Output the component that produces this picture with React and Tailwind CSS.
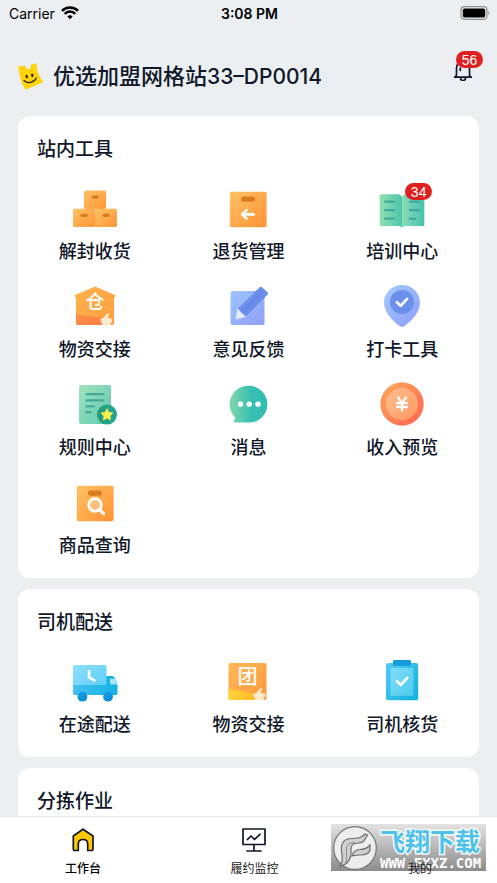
import React from "react";

const INK = "#101729";

function Gradient({ id, from, to, flat }) {
  return (
    <linearGradient id={id} x1="0" y1="0" x2="1" y2={flat ? "0" : "1"}>
      <stop offset="0" stopColor={from} />
      <stop offset="1" stopColor={to} />
    </linearGradient>
  );
}

function Icon({ children }) {
  return (
    <svg viewBox="0 0 48 48" className="size-12" fill="none" aria-hidden="true">
      {children}
    </svg>
  );
}

function BoxesIcon() {
  return (
    <Icon>
      <defs><Gradient id="boxes" from="#ffc266" to="#ff9638" /></defs>
      {[[13, 6.5], [2, 24.7], [24, 24.7]].map(([x, y]) => (
        <g key={`${x}-${y}`}>
          <rect x={x} y={y} width="22" height="18.4" rx="1.6" fill="url(#boxes)" />
          <rect x={x + 7.5} y={y + 5} width="7.4" height="3.2" rx="1.6" fill="#d97d1c" />
        </g>
      ))}
    </Icon>
  );
}

function ParcelIcon({ children }) {
  return (
    <Icon>
      <defs><Gradient id="parcel" from="#ffc266" to="#ff9233" /></defs>
      <rect x="5.8" y="7.8" width="36.8" height="35.4" rx="1.8" fill="url(#parcel)" />
      <rect x="17" y="12.4" width="14" height="5.4" rx="2.2" fill="#d97d1c" />
      {children}
    </Icon>
  );
}

function ReturnIcon() {
  return (
    <ParcelIcon>
      <path d="M22.5 26.3 18.2 30.4l4.3 4.1M18.8 30.4h11" stroke="#fff" strokeWidth="2.7" strokeLinecap="round" strokeLinejoin="round" />
    </ParcelIcon>
  );
}

function SearchIcon() {
  return (
    <ParcelIcon>
      <circle cx="24" cy="27" r="6.3" fill="#ffc07c" stroke="#fff" strokeWidth="2.7" />
      <path d="m28.8 31.8 3.8 3.8" stroke="#fff" strokeWidth="3" strokeLinecap="round" />
    </ParcelIcon>
  );
}

function BookIcon() {
  return (
    <Icon>
      <defs>
        <Gradient id="page-left" from="#92dfb0" to="#4bc6ab" flat />
        <Gradient id="page-right" from="#8bdcb4" to="#45c3ae" flat />
      </defs>
      <path d="M3.2 10.3h16.3c2.5 0 4.5 1.4 4.5 3.4v30.6c-.6-1.6-1.6-2.3-3.2-2.3H3.2a1.5 1.5 0 0 1-1.5-1.5V11.8a1.5 1.5 0 0 1 1.5-1.5Z" fill="url(#page-left)" />
      <path d="M44.8 10.3H28.5c-2.5 0-4.5 1.4-4.5 3.4v30.6c.6-1.6 1.6-2.3 3.2-2.3h17.6a1.5 1.5 0 0 0 1.5-1.5V11.8a1.5 1.5 0 0 0-1.5-1.5Z" fill="url(#page-right)" />
      <path d="M7 17.7h9M7 26.2h9M7 34.7h9M32 17.7h9M32 26.2h9M32 34.7h5" stroke="#41a99c" strokeWidth="2.3" strokeLinecap="round" />
    </Icon>
  );
}

function Hand() {
  return (
    <path d="M31.5 43 29 37.2l3.4-1.4 4.1-4.6c1.2-.4 1.9.7 1.3 1.9l-1.2 2.7 4.2 1c.6.2.7.7.6 1.2L39.2 43Z" fill="#ffecd0" />
  );
}

function DepotIcon() {
  return (
    <Icon>
      <defs>
        <Gradient id="depot" from="#ffb651" to="#ff9a3d" />
        <Gradient id="depot-floor" from="#ff8e47" to="#ff7e40" flat />
        <clipPath id="depot-clip">
          <path d="M24 4.6 44 13c.6.3.6 1.7-.1 2.3L43 15.3V41.5A1.6 1.6 0 0 1 41.4 43H6.6A1.6 1.6 0 0 1 5 41.5V15.3L4 15.2c-.6-.6-.6-1.9.1-2.2Z" />
        </clipPath>
      </defs>
      <g clipPath="url(#depot-clip)">
        <rect width="48" height="48" fill="url(#depot)" />
        <path d="m4 32.5 27 3.5 3 8H4Z" fill="url(#depot-floor)" />
        <Hand />
      </g>
      <text x="24" y="27" textAnchor="middle" fontSize="19" fontWeight="500" fill="#fff">仓</text>
    </Icon>
  );
}

function GroupIcon() {
  return (
    <Icon>
      <defs>
        <Gradient id="group" from="#ffbd5c" to="#ff9335" />
        <Gradient id="group-floor" from="#ffd340" to="#ffbd20" flat />
        <clipPath id="group-clip"><rect x="4.5" y="6" width="38" height="37" rx="2" /></clipPath>
      </defs>
      <g clipPath="url(#group-clip)">
        <rect width="48" height="48" fill="url(#group)" />
        <path d="m4 31.5 25 4.5 2 8H4Z" fill="url(#group-floor)" />
        <Hand />
      </g>
      <text x="23.5" y="27" textAnchor="middle" fontSize="20" fontWeight="500" fill="#fff">团</text>
    </Icon>
  );
}

function PencilIcon() {
  return (
    <Icon>
      <defs>
        <Gradient id="note" from="#9dc4ff" to="#929ff8" />
        <Gradient id="pencil" from="#6f96ec" to="#6a86e8" />
      </defs>
      <rect x="6.5" y="9" width="34" height="34" rx="1.8" fill="url(#note)" />
      <path d="M12 37 13.8 27 21.5 34.2Z" fill="#dfebff" stroke="#dfebff" strokeLinejoin="round" />
      <path d="M13.8 26.8 35.3 5.5a2.2 2.2 0 0 1 3 0l5 4.6a2.2 2.2 0 0 1 0 3L21.7 34.4Z" fill="url(#pencil)" />
      <path d="m17.7 30.6 20.8-20.8" stroke="#6689e6" strokeWidth="3" />
    </Icon>
  );
}

function PinIcon() {
  return (
    <Icon>
      <defs><Gradient id="pin" from="#a4ccff" to="#8d9cfb" /></defs>
      <path d="M24 3C14 3 6 10.8 6 20.6c0 8.7 6.9 17.3 15.8 23.7a3.7 3.7 0 0 0 4.4 0C35.1 37.9 42 29.3 42 20.6 42 10.8 34 3 24 3Z" fill="url(#pin)" />
      <circle cx="24" cy="20" r="12" fill="#6b90eb" />
      <path d="m19 20.3 3.7 3.6 6.3-7" stroke="#fff" strokeWidth="2.7" strokeLinecap="round" strokeLinejoin="round" />
    </Icon>
  );
}

function RulesIcon() {
  return (
    <Icon>
      <defs>
        <Gradient id="rules" from="#a2e3bd" to="#5cc9b0" />
        <Gradient id="seal" from="#279b78" to="#1fa995" flat />
      </defs>
      <rect x="8" y="5" width="32" height="39" rx="2" fill="url(#rules)" />
      <path d="M15.5 14.2h17M15.5 20.3h17M15.5 26.3h7.5M15.5 32.2h4" stroke="#44a79b" strokeWidth="2.2" strokeLinecap="round" />
      <circle cx="36" cy="34.6" r="10" fill="url(#seal)" />
      <path d="m36 28.7 1.8 3.7 4.1.6-3 2.9.7 4.1-3.6-2-3.6 2 .7-4.1-3-2.9 4.1-.6Z" fill="#ffee4e" stroke="#ffee4e" strokeWidth=".8" strokeLinejoin="round" />
    </Icon>
  );
}

function MessageIcon() {
  return (
    <Icon>
      <defs>
        <linearGradient id="message" x1="0" x2="1">
          <stop offset="0" stopColor="#84d6ab" />
          <stop offset=".55" stopColor="#38c0b2" />
          <stop offset="1" stopColor="#2fbdb2" />
        </linearGradient>
      </defs>
      <path d="M25 5.8a18.4 18.4 0 1 1 0 36.8H11.2c-1.2 0-1.8-1-1.2-2l1.2-3.2A18.4 18.4 0 0 1 25 5.8Z" fill="url(#message)" />
      <circle cx="16.5" cy="24.2" r="2.7" fill="#fff" />
      <circle cx="25.2" cy="24.2" r="2.7" fill="#fff" />
      <circle cx="34" cy="24.2" r="2.7" fill="#fff" />
    </Icon>
  );
}

function IncomeIcon() {
  return (
    <Icon>
      <defs>
        <Gradient id="coin" from="#ffaa5c" to="#ff6350" />
        <Gradient id="coin-face" from="#ffc18f" to="#ff9560" />
      </defs>
      <circle cx="24" cy="24" r="21.7" fill="url(#coin)" />
      <circle cx="24" cy="24" r="16" fill="url(#coin-face)" />
      <path d="m20 17.5 4 5.7 4-5.7M24 23.2v7.5M19 23.2h10M19 27h10" stroke="#fff" strokeWidth="2.3" strokeLinecap="round" strokeLinejoin="round" />
    </Icon>
  );
}

function TruckIcon() {
  return (
    <Icon>
      <defs>
        <Gradient id="cargo" from="#8fe0ff" to="#55cbf5" />
        <Gradient id="chassis" from="#45bff0" to="#14b2e4" flat />
        <Gradient id="wheel" from="#1ba0e6" to="#0586d6" />
      </defs>
      <path d="M35 19h6c1 0 1.7.4 2.2 1.2l2.7 5c.3.5.4 1 .4 1.6v9.7c0 1-.6 1.5-1.5 1.5H35Z" fill="#18b3e5" />
      <rect x="2" y="8" width="33.5" height="29" rx="2" fill="url(#cargo)" />
      <path d="M2 28h44.3v8.5c0 1-.6 1.5-1.5 1.5H3.5A1.5 1.5 0 0 1 2 36.5Z" fill="url(#chassis)" />
      <path d="M39 21.7h4.5l2.5 4.5v1.3h-5.5c-1 0-1.5-.5-1.5-1.5Z" fill="#a8e8ff" />
      <path d="M18 14.2v6.2l5.3 3" stroke="#fff" strokeWidth="2.7" strokeLinecap="round" strokeLinejoin="round" />
      <circle cx="11.4" cy="39.7" r="4.9" fill="url(#wheel)" />
      <circle cx="37" cy="39.7" r="4.9" fill="url(#wheel)" />
    </Icon>
  );
}

function ClipboardIcon() {
  return (
    <Icon>
      <defs>
        <Gradient id="board" from="#55c9f3" to="#0eb2de" />
        <Gradient id="sheet" from="#82dcfb" to="#4acbed" />
      </defs>
      <rect x="8" y="6" width="32.2" height="37.2" rx="2" fill="url(#board)" />
      <rect x="12.5" y="11" width="23" height="27.7" rx="1" fill="url(#sheet)" />
      <rect x="15" y="3" width="18" height="5.7" rx="1.2" fill="#149bdc" />
      <path d="m19 24.2 3.8 3.7 6.4-7" stroke="#fff" strokeWidth="2.8" strokeLinecap="round" strokeLinejoin="round" />
    </Icon>
  );
}

const stationTools = [
  { label: "解封收货", icon: BoxesIcon },
  { label: "退货管理", icon: ReturnIcon },
  { label: "培训中心", icon: BookIcon, count: 34 },
  { label: "物资交接", icon: DepotIcon },
  { label: "意见反馈", icon: PencilIcon },
  { label: "打卡工具", icon: PinIcon },
  { label: "规则中心", icon: RulesIcon },
  { label: "消息", icon: MessageIcon },
  { label: "收入预览", icon: IncomeIcon },
  { label: "商品查询", icon: SearchIcon },
];

const driverTools = [
  { label: "在途配送", icon: TruckIcon },
  { label: "物资交接", icon: GroupIcon },
  { label: "司机核货", icon: ClipboardIcon },
];

function Badge({ children, className }) {
  return (
    <span className={`absolute flex h-[17px] w-[27px] items-center justify-center rounded-full bg-[#df2020] font-['Liberation_Sans',sans-serif] text-[14px] leading-none font-normal text-white ${className}`}>
      {children}
    </span>
  );
}

function Tool({ label, icon: ToolIcon, count }) {
  return (
    <button type="button" className="flex flex-col items-center gap-[6px]">
      <span className="relative block">
        <ToolIcon />
        {count && <Badge className="-top-px left-[27px]">{count}</Badge>}
      </span>
      <span className="text-[18px] leading-7 font-medium">{label}</span>
    </button>
  );
}

function Panel({ title, tools }) {
  return (
    <section className="rounded-xl bg-white pt-5 pb-[18px]">
      <h2 className="px-[19px] text-[19px] leading-7 font-medium">{title}</h2>
      <div className="mt-5 grid grid-cols-3 gap-y-4">
        {tools.map((tool) => <Tool key={tool.label} {...tool} />)}
      </div>
    </section>
  );
}

function StatusBar() {
  return (
    <div className="grid h-[26px] shrink-0 grid-cols-3 items-center pr-[7px] pl-[9px] text-[14px] text-black">
      <span className="flex items-center gap-[6px]">
        Carrier
        <svg viewBox="0 0 18 14" className="h-[14px] w-[18px]" aria-hidden="true">
          <path d="M9 13.2 6.3 10.5a3.9 3.9 0 0 1 5.4 0Z" fill="#000" />
          <path d="M3.7 7.8a7.5 7.5 0 0 1 10.6 0M1 4.8a11.4 11.4 0 0 1 16 0" fill="none" stroke="#000" strokeWidth="2.5" />
        </svg>
      </span>
      <span className="text-center font-semibold">3:08 PM</span>
      <svg viewBox="0 0 30 14" className="h-[14px] w-[30px] justify-self-end" aria-hidden="true">
        <rect x="1" y=".7" width="26" height="12.6" rx="3.5" fill="none" stroke="#8d9092" strokeWidth="1.2" />
        <rect x="2.8" y="2.5" width="22.4" height="9" rx="1.8" fill="#000" />
        <path d="M28.3 5v4c1.4-.5 1.4-3.5 0-4Z" fill="#8d9092" />
      </svg>
    </div>
  );
}

function Header() {
  return (
    <header className="flex h-[90px] shrink-0 items-center px-[18px] pt-[10px]">
      <svg viewBox="0 0 26 27" className="h-[27px] w-[26px]" aria-hidden="true">
        <path d="M.3 5C.2 4 .6 3.400 1.500 3.300l4.400-.5c1 0 1.500.4 1.800 1.300.6 1.600 1.700 2.300 3.200 2 1.400-.3 2-1.300 1.800-2.900-.1-1 .3-1.600 1.200-1.800l3.300-.8c.9-.1 1.400.3 1.500 1.200.2 6.500 2 11 6 16 .5.700.4 1.300-.3 1.700L8.600 26.200c-.8.4-1.500.1-1.900-.7C3 19.500 1.200 12 .3 5Z" fill="#ffd30a" />
        <ellipse cx="8.700" cy="13.500" rx="1.200" ry="1.800" fill="#28251d" transform="rotate(-12 8.7 13.5)" />
        <ellipse cx="14.300" cy="12.200" rx="1.200" ry="1.800" fill="#28251d" transform="rotate(-12 14.3 12.2)" />
        <path d="M6 17.500c3.500 3.500 10 2.300 12.300-2.500" fill="none" stroke="#28251d" strokeWidth="1.200" strokeLinecap="round" />
      </svg>
      <h1 className="ml-[9px] text-[22px] leading-8 font-medium">
        优选加盟网格站<span className="text-[21px]">33–DP0014</span>
      </h1>
      <button type="button" aria-label="通知" className="relative mt-[-12px] mr-[5px] ml-auto">
        <svg viewBox="0 0 22 22" className="size-[22px]" fill="none" stroke={INK} strokeWidth="1.7" aria-hidden="true">
          <path d="M4.500 16.500V9a6.500 6.500 0 0 1 13 0v7.500l1.800 1.700H2.700Z" strokeLinejoin="round" />
          <path d="M8.500 19a2.500 2.500 0 0 0 5 0M8.300 11.500V9" strokeLinecap="round" />
        </svg>
        <Badge className="-top-2 left-1">56</Badge>
      </button>
    </header>
  );
}

function Tab({ label, active, children }) {
  return (
    <button type="button" aria-current={active ? "page" : undefined} className={`flex flex-col items-center gap-[7px] text-[12px] leading-5 ${active ? "font-medium text-black" : "text-[#222]"}`}>
      <svg viewBox="0 0 24 24" className="size-6" fill="none" stroke={INK} strokeWidth="1.7" strokeLinejoin="round" strokeLinecap="round" aria-hidden="true">
        {children}
      </svg>
      <span className="relative z-10">{label}</span>
    </button>
  );
}

function Watermark() {
  return (
    <div className="pointer-events-none absolute right-[11px] bottom-3 flex h-[47px] w-[155px] items-center bg-linear-to-b from-[#dedede]/85 to-[#808080]/90 pl-[2px]">
      <svg viewBox="0 0 44 44" className="size-11 shrink-0" aria-hidden="true">
        <circle cx="22" cy="22" r="21.3" fill="#ededed" stroke="#777" strokeWidth="1.2" />
        <path d="M7 40c4-5 2-10 1.500-15C7.500 16 12 12.500 19 12.500c6 0 9-.5 13-4.500l2.500 1-4 6.500c-3 2-6 1.500-8.500 2-3 .6-4 2.500-4 6 .5 8-2.500 15-11 16.500Z" fill="#d0d0d0" stroke="#6c6c6c" strokeWidth="1.2" />
        <path d="M12 38c3-5 1-11 1.500-15.500.4-4 3.500-6 8.500-6" fill="none" stroke="#888" />
        <path d="M19 30c1.500-5 4-6.500 8-6.500 4.500 0 7-1 10-4.500v5c-1.500 4.500-5 5-9 5-3.500 0-5.500 0-9 1Z" fill="#d0d0d0" stroke="#6c6c6c" strokeWidth="1.2" />
      </svg>
      <div className="ml-[3px] flex flex-col">
        <span className="text-[25px] leading-[30px] font-bold whitespace-nowrap text-[#4fc1e9] [-webkit-text-stroke:3px_#f4fbfd] [paint-order:stroke_fill]">飞翔下载</span>
        <span className="font-['DejaVu_Sans_Mono','Liberation_Mono',monospace] text-[14px] leading-3 font-bold whitespace-nowrap text-white">WWW.FXXZ.COM</span>
      </div>
    </div>
  );
}

export default function App() {
  return (
    <div className="flex h-screen flex-col bg-[#ebeff2] font-[Inter,'Noto_Sans_CJK_SC',sans-serif] text-[#101729]">
      <StatusBar />
      <Header />
      <main className="flex min-h-0 flex-1 flex-col gap-[11px] overflow-y-auto px-[18px] [scrollbar-width:none] *:shrink-0">
        <Panel title="站内工具" tools={stationTools} />
        <Panel title="司机配送" tools={driverTools} />
        <Panel title="分拣作业" tools={[]} />
      </main>
      <nav className="relative flex shrink-0 justify-between border-t border-[#e3e6e8] bg-white px-[65px] pt-[11px] pb-1">
        <Tab label="工作台" active>
          <path d="M12 1.2 22 8v12.800c0 1-.7 1.700-1.700 1.700h-3.600V16c0-3-1.700-4.500-4.700-4.500S7.300 13 7.300 16v6.500H4c-1 0-1.700-.7-1.700-1.700V8Z" fill="#ffc800" />
        </Tab>
        <Tab label="履约监控">
          <path d="M1 1h22v15.500H1ZM12 16.500V23M5 23h14M5.500 11.500 9 8l3.500 3.500L18 6.300" />
        </Tab>
        <Tab label="我的">
          <circle cx="12" cy="6" r="5" />
          <path d="M2 23c0-6 4-10 10-10s10 4 10 10Z" />
        </Tab>
        <Watermark />
      </nav>
    </div>
  );
}
